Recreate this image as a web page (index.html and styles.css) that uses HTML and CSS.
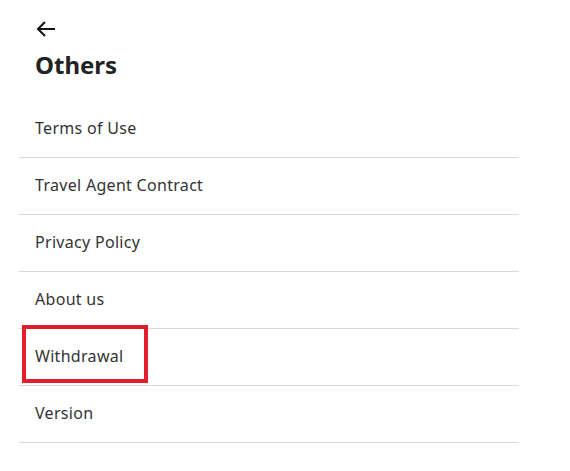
FILE: index.html
```html
<!DOCTYPE html>
<html>
<head>
<meta charset="utf-8">
<link rel="stylesheet" href="styles.css">
</head>
<body>
<div class="page">
  <header class="header">
    <button class="back" aria-label="Back">
      <svg width="20" height="16" viewBox="0 0 20 16"><path d="M9 1 L2 8 L9 15 M2 8 H19" fill="none" stroke="#111" stroke-width="2"/></svg>
    </button>
    <h1 class="title">Others</h1>
  </header>
  <ul class="menu">
    <li class="item">Terms of Use</li>
    <li class="item">Travel Agent Contract</li>
    <li class="item">Privacy Policy</li>
    <li class="item">About us</li>
    <li class="item highlighted"><span class="label">Withdrawal</span><span class="mark"></span></li>
    <li class="item">Version</li>
  </ul>
</div>
</body>
</html>
```
FILE: styles.css
```css
* { box-sizing: border-box; }
body {
  margin: 0;
  background: #fff;
  font-family: "Noto Sans", "Open Sans", sans-serif;
  color: #333;
}
.page {
  padding: 0 0 0 19px;
  width: 519px;
}
.header {
  padding: 21px 0 0 16px;
  height: 101px;
}
.back {
  display: block;
  border: 0;
  background: none;
  padding: 0;
  margin: 0 0 0 1px;
  width: 20px;
  height: 16px;
}
.back svg { display: block; }
.title {
  margin: 12px 0 0 0;
  font-size: 24px;
  font-weight: 700;
  line-height: 32px;
  color: #222;
}
.menu {
  list-style: none;
  margin: 0;
  padding: 0;
}
.item {
  position: relative;
  height: 57px;
  padding: 0 0 2px 16px;
  display: flex;
  align-items: center;
  font-size: 16px;
  letter-spacing: 0.3px;
  border-bottom: 1px solid #d9d9d9;
}
.mark {
  position: absolute;
  left: 3px;
  top: -4px;
  width: 126px;
  height: 58px;
  border: 4px solid #e21d2c;
}
```
